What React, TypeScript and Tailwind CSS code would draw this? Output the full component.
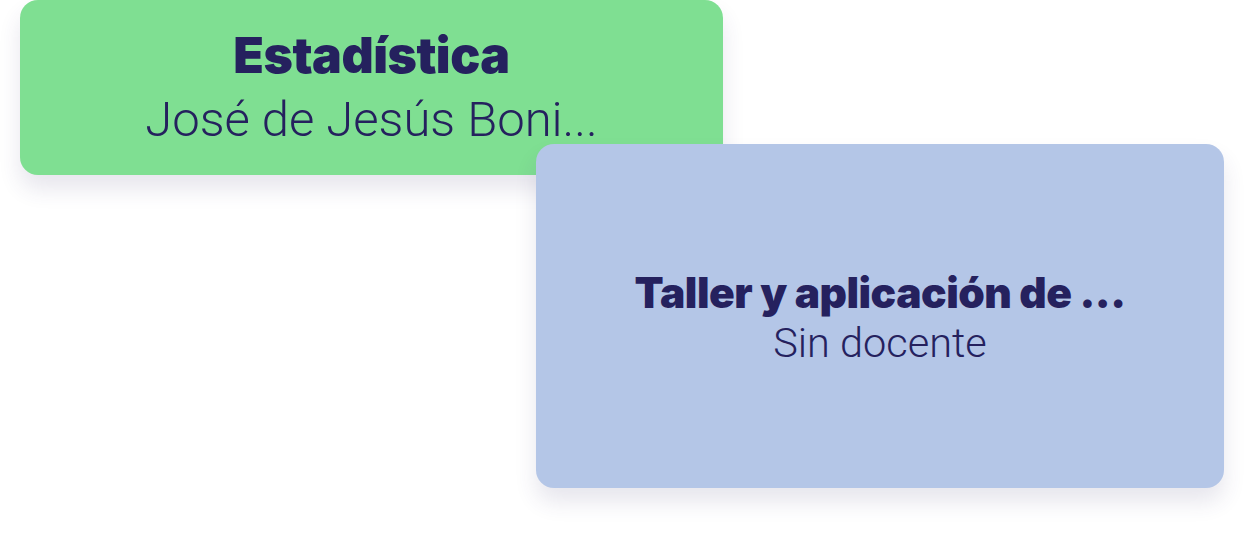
export default function App() {
  return (
    <div className="w-[1248px] h-[536px] bg-white overflow-hidden">
      <div className="ml-[20px] w-[703px] h-[175px] rounded-[18px] bg-[#7fdf92] shadow-[0_14px_22px_rgba(60,50,110,0.12)] flex flex-col items-center pt-[28px] gap-[11px]">
        <div className="font-['Inter',sans-serif] font-black text-[50px] leading-[54px] text-[#25215e] tracking-[-0.5px]">
          Estadística
        </div>
        <div className="font-['Roboto',sans-serif] font-light text-[49px] leading-[54px] text-[#25215e]">
          José de Jesús Boni...
        </div>
      </div>
      <div className="relative ml-[536px] -mt-[31px] w-[688px] h-[344px] rounded-[18px] bg-[#b4c6e7] shadow-[0_14px_22px_rgba(60,50,110,0.12)] flex flex-col items-center justify-center pt-[4px]">
        <div className="font-['Inter',sans-serif] font-black text-[42.5px] leading-[50px] text-[#25215e] tracking-[-0.5px]">
          Taller y aplicación de ...
        </div>
        <div className="font-['Roboto',sans-serif] font-light text-[41.5px] leading-[50px] text-[#25215e]">
          Sin docente
        </div>
      </div>
    </div>
  );
}
